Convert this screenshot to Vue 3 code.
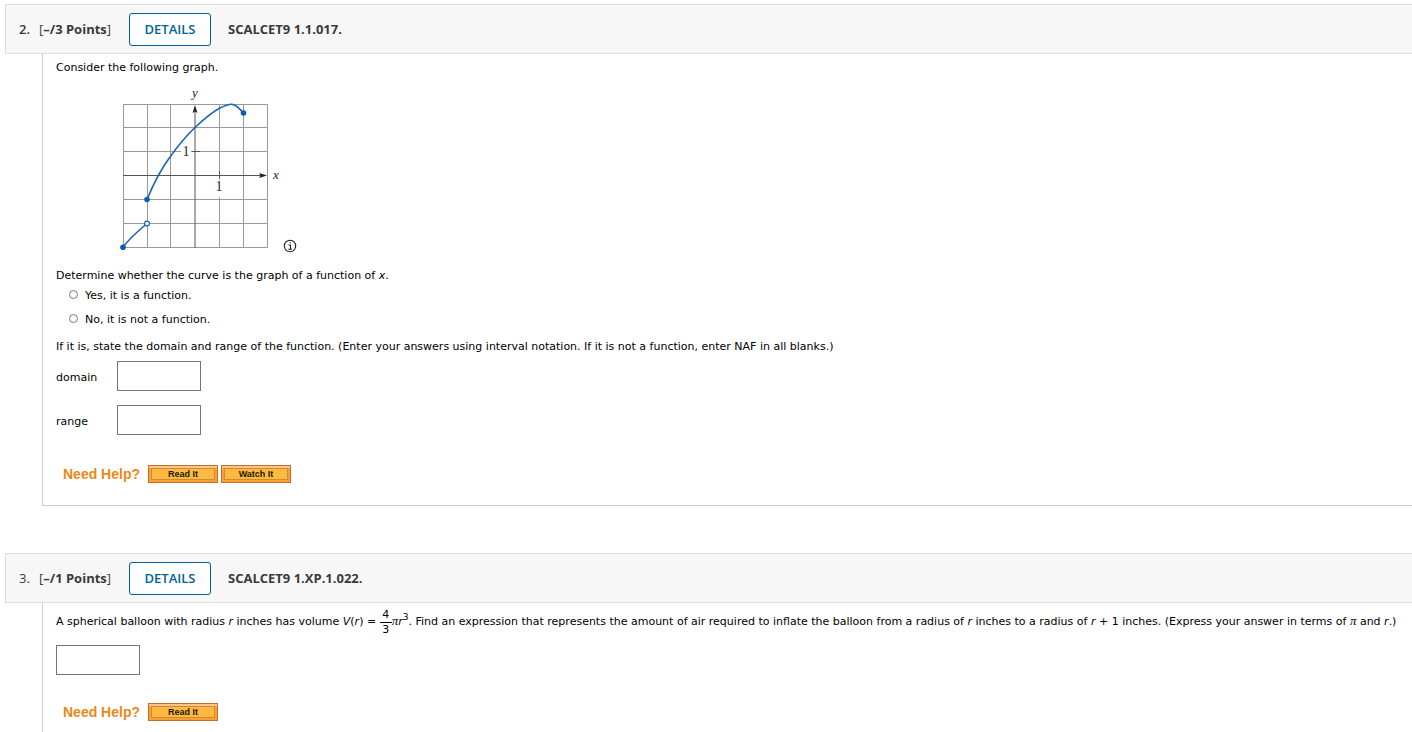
<script setup>
import { ref } from 'vue'

const choice = ref('')
const domain = ref('')
const range = ref('')
const volume = ref('')
const verticals = [13, 37, 60, 109, 133, 157]
const horizontals = [24, 47, 71, 119, 143, 167]
</script>

<template>
  <main class="page">
    <section class="question">
      <header class="bar">
        <span class="number">2.</span>
        <span class="points"><span class="bracket">[</span>–/3 Points<span class="bracket">]</span></span>
        <button type="button" class="details">DETAILS</button>
        <span class="code">SCALCET9 1.1.017.</span>
      </header>
      <div class="body first">
        <p>Consider the following graph.</p>
        <div class="figure">
          <svg class="graph" width="170" height="176" viewBox="0 0 170 176" role="img" aria-label="Graph of a curve">
            <g stroke="#999" stroke-width="1">
              <line v-for="x in verticals" :key="'v' + x" :x1="x + 0.5" :x2="x + 0.5" y1="24" y2="168" />
              <line v-for="y in horizontals" :key="'h' + y" :y1="y + 0.5" :y2="y + 0.5" x1="13" x2="158" />
            </g>
            <rect x="71" y="66" width="10" height="12" fill="#fff" />
            <rect x="104" y="100" width="11" height="17" fill="#fff" />
            <g stroke="#555" stroke-width="1">
              <line x1="85" x2="85" y1="28" y2="168" />
              <line x1="13" x2="153" y1="95.5" y2="95.5" />
              <line x1="82" x2="90" y1="71.5" y2="71.5" />
              <line x1="109.5" x2="109.5" y1="91" y2="98" />
            </g>
            <path d="M85 25 L82.5 33 L85 31.5 L87.5 33Z M157 95.5 L149 93 L150.5 95.5 L149 98Z" fill="#222" />
            <g fill="none" stroke="#1763b8" stroke-width="1.6">
              <path d="M37 119.5 C43 105 51 89 60 77 C70 63 76 56 85 47.5 C93 40 102 32 110 28 C116 25 119 24 122 24.2 C127 25 130 29 133.500 33" />
              <path d="M13 167 C20 158 28 151 37 143.500" />
            </g>
            <g fill="#0b5cb5">
              <circle cx="37" cy="119.5" r="2.8" />
              <circle cx="133.5" cy="33" r="2.8" />
              <circle cx="13" cy="167.300" r="2.8" />
            </g>
            <circle cx="37" cy="143.5" r="2.400" fill="#fff" stroke="#1763b8" stroke-width="1.2" />
            <g class="mark" text-anchor="middle">
              <text x="85" y="17" class="axis">y</text>
              <text x="166" y="99" class="axis">x</text>
              <text x="76" y="76">1</text>
              <text x="109" y="111">1</text>
            </g>
          </svg>
          <button type="button" class="info" aria-label="Image description">
            <svg width="14" height="14" viewBox="0 0 14 14">
              <circle cx="7" cy="7" r="5.7" fill="none" stroke="#222" stroke-width="1.100" />
              <path d="M5.500 6H7.500V10M5.300 10.200H9M6.500 3.800H7.800" fill="none" stroke="#222" stroke-width="1.100" />
            </svg>
          </button>
        </div>
        <p id="ask">Determine whether the curve is the graph of a function of <i>x</i>.</p>
        <div class="options" role="radiogroup" aria-labelledby="ask">
          <label><input v-model="choice" type="radio" name="function" value="yes">Yes, it is a function.</label>
          <label><input v-model="choice" type="radio" name="function" value="no">No, it is not a function.</label>
        </div>
        <p>If it is, state the domain and range of the function. (Enter your answers using interval notation. If it is not a function, enter NAF in all blanks.)</p>
        <div class="fields">
          <label for="domain">domain</label>
          <input id="domain" v-model="domain" class="blank" type="text">
          <label for="range">range</label>
          <input id="range" v-model="range" class="blank" type="text">
        </div>
        <div class="help">
          <span class="need">Need Help?</span>
          <button type="button" class="tool">Read It</button>
          <button type="button" class="tool">Watch It</button>
        </div>
      </div>
    </section>

    <section class="question">
      <header class="bar">
        <span class="number light">3.</span>
        <span class="points"><span class="bracket">[</span>–/1 Points<span class="bracket">]</span></span>
        <button type="button" class="details">DETAILS</button>
        <span class="code">SCALCET9 1.XP.1.022.</span>
      </header>
      <div class="body second">
        <p class="formula">A spherical balloon with radius <i>r</i> inches has volume <i>V</i>(<i>r</i>) = <span class="fraction"><span>4</span><span class="under">3</span></span><span class="pi">π</span><i>r</i><sup>3</sup>. Find an expression that represents the amount of air required to inflate the balloon from a radius of <i>r</i> inches to a radius of <i>r</i> + 1 inches. (Express your answer in terms of <span class="pi">π</span> and <i>r</i>.)</p>
        <input v-model="volume" class="blank" type="text" aria-label="Expression for amount of air">
        <div class="help">
          <span class="need">Need Help?</span>
          <button type="button" class="tool">Read It</button>
        </div>
      </div>
    </section>
  </main>
</template>

<style>
body {
  margin: 0;
  background: #fff;
  overflow: hidden;
}
</style>

<style scoped>
.page {
  padding: 4px 0 0 5px;
  font: 11px/18px Verdana, "DejaVu Sans", sans-serif;
  color: #000;
}
.bar {
  display: flex;
  align-items: center;
  box-sizing: border-box;
  height: 50px;
  padding-left: 13px;
  border: 1px solid #ddd;
  border-right: 0;
  background: #f7f7f7;
  font: bold 13px/18px "Open Sans", sans-serif;
  color: #3a3a3a;
}
.number {
  width: 20px;
  font-weight: 600;
}
.light {
  font-weight: 500;
}
.points {
  width: 90px;
}
.bracket {
  font-weight: 500;
}
.details {
  box-sizing: border-box;
  width: 82px;
  height: 33px;
  margin-right: 17px;
  padding: 0;
  border: 1px solid #006298;
  border-radius: 3px;
  background: #fff;
  font: 600 13px/18px "Open Sans", sans-serif;
  color: #006298;
}
.body {
  margin-left: 37px;
  padding: 4px 0 0 13px;
  border-left: 1px solid #ccc;
}
.first {
  padding-top: 5px;
  padding-bottom: 22px;
  margin-bottom: 47px;
  border-bottom: 1px solid #ccc;
}
p {
  margin: 0;
  white-space: nowrap;
}
.figure {
  display: flex;
  align-items: flex-end;
  gap: 3px;
  margin: 3px 0 11px 54px;
}
.graph {
  display: block;
}
.mark {
  font: 14px "Liberation Serif", serif;
  fill: #222;
}
.axis {
  font-size: 13px;
  font-style: italic;
}
.info {
  width: 14px;
  height: 14px;
  margin-bottom: 3px;
  padding: 0;
  border: 0;
  background: none;
}
.info svg {
  display: block;
}
.options {
  display: grid;
  gap: 6px;
  margin: 2px 0 9px 13px;
}
.options label {
  display: flex;
  align-items: center;
}
.options input {
  appearance: none;
  box-sizing: border-box;
  width: 9px;
  height: 9px;
  margin: 0 7px 3px 0;
  border: 1px solid #767676;
  border-radius: 50%;
  background: #fff;
}
.options input:checked {
  background: #767676;
}
.fields {
  display: grid;
  grid-template-columns: 61px 84px;
  gap: 14px 0;
  align-items: center;
  margin: 5px 0 30px;
}
.fields label {
  padding-top: 4px;
}
.blank {
  box-sizing: border-box;
  width: 84px;
  height: 30px;
  padding: 2px 4px;
  border: 1px solid #767676;
  background: #fff;
  font: inherit;
}
.help {
  display: flex;
  align-items: center;
  gap: 3px;
  margin-left: 7px;
  height: 18px;
}
.need {
  width: 82px;
  font: bold 14px/18px "Liberation Sans", Arial, sans-serif;
  color: #ec8718;
}
.tool {
  box-sizing: border-box;
  width: 70px;
  height: 18px;
  padding: 0;
  border: 1px solid #bd722d;
  background: #fdb940;
  box-shadow: inset 0 2px #ffc486, inset 0 0 0 2px #ff9d35, inset 0 0 0 3px #cf8b35;
  font: bold 9px/16px "Liberation Sans", Arial, sans-serif;
  color: #231800;
}
.second {
  height: 130px;
}
.formula {
  height: 38px;
  line-height: 30px;
}
.fraction {
  display: inline-flex;
  flex-direction: column;
  width: 12px;
  text-align: center;
  vertical-align: middle;
  line-height: 14px;
}
.under {
  border-top: 1px solid #000;
}
.pi {
  font: italic 13px "Liberation Serif", serif;
  line-height: 0;
}
sup {
  font-size: 9px;
  line-height: 0;
}
.second .blank {
  display: block;
  margin-bottom: 28px;
}
</style>
